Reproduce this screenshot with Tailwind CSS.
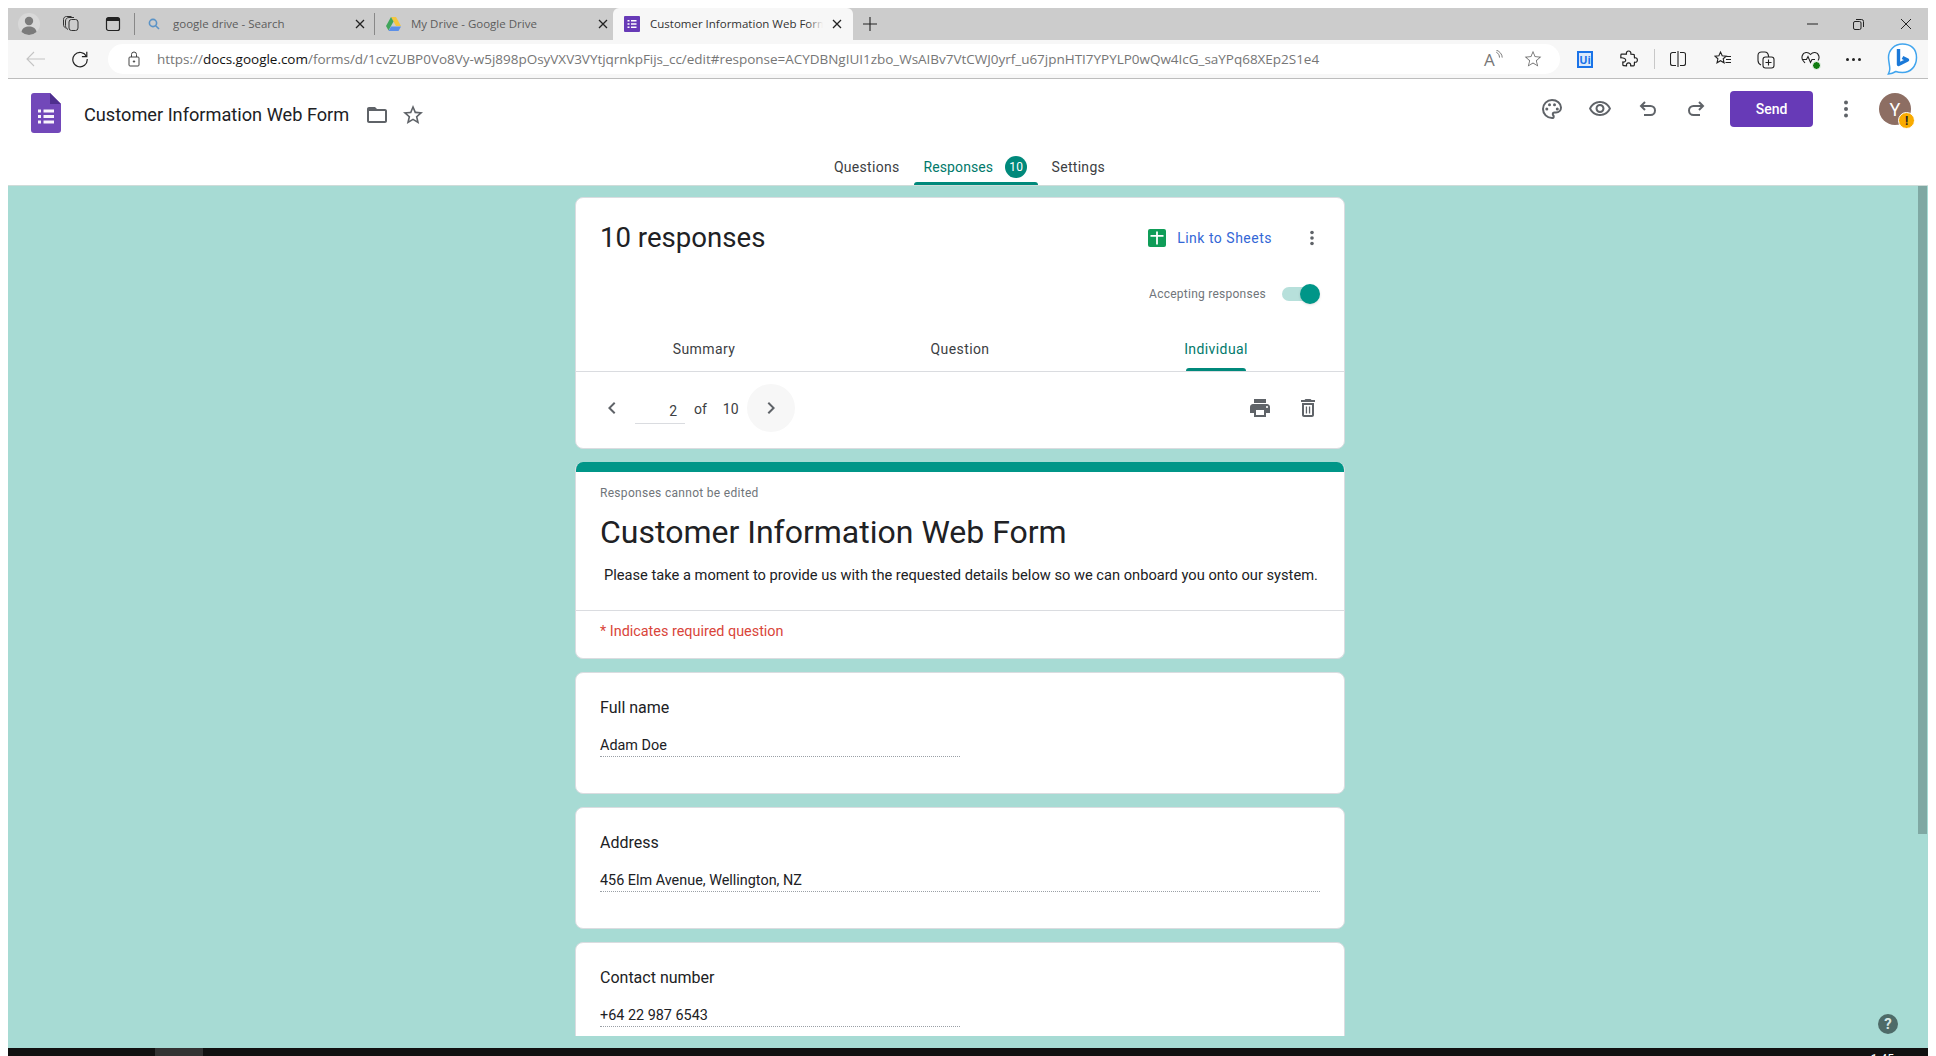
<!DOCTYPE html>
<html lang="en">
<head>
  <meta charset="UTF-8" />
  <meta name="viewport" content="width=device-width, initial-scale=1.0"/>
  <title>Customer Information Web Form - Google Forms</title>
  <script src="https://cdn.jsdelivr.net/npm/@tailwindcss/browser@4"></script>
</head>
<body class="bg-white font-['Roboto',sans-serif] overflow-hidden">
<div class="h-[1056px] pt-2 px-2 flex flex-col overflow-hidden relative">

  <!-- tab strip -->
  <div class="h-8 bg-[#cccccc] flex items-center shrink-0 font-['Open_Sans',sans-serif] text-[11.5px] text-[#5c5c5c]">
    <div class="w-[42px] flex justify-center">
      <svg width="22" height="22" viewBox="0 0 22 22"><circle cx="11" cy="11" r="11" fill="#d8d8d8"/><circle cx="11" cy="8" r="4.2" fill="#7b7b7b"/><path d="M3.5 19c.6-4 3.8-5.5 7.5-5.5s6.900 1.500 7.500 5.500a11 11 0 0 1-15 0z" fill="#7b7b7b"/></svg>
    </div>
    <div class="w-[42px] flex justify-center">
      <svg width="18" height="18" viewBox="0 0 18 18" fill="none" stroke="#333" stroke-width="1"><rect x="7" y="4.500" width="9" height="11" rx="2.500"/><path d="M6 14.500c-1.500-.8-2.500-2-2.500-4V6c0-2 1.500-3.500 3.500-3.500h5M3.500 13C2 12 1.500 11 1.500 9V4.500c0-2 1.500-3 3-3h5"/></svg>
    </div>
    <div class="w-[42px] flex justify-center">
      <svg width="16" height="16" viewBox="0 0 16 16" fill="none"><rect x="1.500" y="1.500" width="13" height="13" rx="2" stroke="#222" stroke-width="1.200"/><path d="M1.500 3.500a2 2 0 0 1 2-2h9a2 2 0 0 1 2 2V5h-13z" fill="#222"/></svg>
    </div>
    <div class="w-px h-[22px] bg-[#888] mr-[1px]"></div>

    <div class="w-[238px] flex items-center h-full pl-[11px]">
      <svg width="14" height="14" viewBox="0 0 14 14" fill="none" stroke="#5a93c7" stroke-width="1.600"><circle cx="6" cy="6" r="3.600"/><path d="m8.700 8.700 3.300 3.300"/></svg>
      <span class="ml-[12px] w-[182px]">google drive - Search</span>
      <svg width="10" height="10" viewBox="0 0 10 10" stroke="#222" stroke-width="1.300"><path d="m1 1 8 8M9 1l-8 8"/></svg>
    </div>
    <div class="w-px h-[22px] bg-[#888]"></div>

    <div class="w-[238px] flex items-center h-full pl-[11px]">
      <svg width="15" height="14" viewBox="0 0 15 14"><path d="M5 0h5l5 9h-5z" fill="#f4c63f"/><path d="M5 0 0 9l2.500 4.500L7.500 4.500z" fill="#3fa55b"/><path d="M2.500 14h10L15 9.500H5z" fill="#5b8fe8"/></svg>
      <span class="ml-[10px] w-[187px]">My Drive - Google Drive</span>
      <svg width="10" height="10" viewBox="0 0 10 10" stroke="#222" stroke-width="1.300"><path d="m1 1 8 8M9 1l-8 8"/></svg>
    </div>

    <div class="w-[240px] h-full bg-[#f7f7f7] rounded-t-[6px] flex items-center pl-[11px] text-[#333]">
      <svg width="16" height="16" viewBox="0 0 16 16"><rect width="16" height="16" rx="1" fill="#673ab7"/><path d="M3.500 4h2v1.500h-2zM7 4h5.500v1.500H7zM3.500 7.250h2v1.500h-2zM7 7.250h5.500v1.500H7zM3.500 10.500h2V12h-2zM7 10.500h5.500V12H7z" fill="#fff"/></svg>
      <span class="relative ml-[10px] w-[173px] overflow-hidden whitespace-nowrap">Customer Information Web Form
        <span class="absolute right-0 top-0 bottom-0 w-4 bg-linear-to-l from-[#f7f7f7] to-transparent"></span>
      </span>
      <svg class="ml-[9px]" width="10" height="10" viewBox="0 0 10 10" stroke="#222" stroke-width="1.300"><path d="m1 1 8 8M9 1l-8 8"/></svg>
    </div>
    <svg class="ml-[10px]" width="14" height="14" viewBox="0 0 14 14" stroke="#222" stroke-width="1.100"><path d="M7 0v14M0 7h14"/></svg>

    <div class="ml-auto flex items-center pr-[16px]">
      <svg class="mr-[35px]" width="11" height="2" viewBox="0 0 11 2"><path d="M0 1h11" stroke="#222"/></svg>
      <svg class="mr-[36px]" width="11" height="11" viewBox="0 0 11 11" fill="none" stroke="#222"><rect x=".500" y="2.500" width="7.500" height="8" rx="1.500"/><path d="M3 .500h5.500a2 2 0 0 1 2 2V8"/></svg>
      <svg width="12" height="12" viewBox="0 0 12 12" stroke="#222"><path d="m1 1 10 10M11 1 1 11"/></svg>
    </div>
  </div>

  <!-- address bar -->
  <div class="h-[39px] bg-[#f7f7f7] border-b border-[#bdbdbd] flex items-center shrink-0">
    <div class="w-[50px] flex justify-center pl-[6px]">
      <svg width="20" height="16" viewBox="0 0 20 16" fill="none" stroke="#c4c4c4" stroke-width="1.100"><path d="M19 8H1M8 1 1 8l7 7"/></svg>
    </div>
    <div class="w-[44px] flex justify-center">
      <svg width="18" height="18" viewBox="0 0 18 18" fill="none" stroke="#222" stroke-width="1.200"><path d="M15.500 6.500A7.200 7.200 0 1 0 16.200 9"/><path d="M15.800 1.800v4.900h-4.900"/></svg>
    </div>
    <div class="w-[1452px] ml-[6px] h-[30px] bg-white rounded-full flex items-center">
      <svg class="ml-[20px]" width="12" height="16" viewBox="0 0 12 16" fill="none" stroke="#444"><rect x="1" y="6" width="10" height="9" rx="1"/><path d="M3.500 6V3.500a2.500 2.500 0 0 1 5 0V6"/><circle cx="6" cy="10.500" r=".7" fill="#444"/></svg>
      <span class="ml-[17px] w-[1172px] whitespace-nowrap overflow-hidden font-['Open_Sans',sans-serif] text-[13.5px] tracking-[-0.02px] text-[#767676]">https://<span class="text-[#111]">docs.google.com</span>/forms/d/1cvZUBP0Vo8Vy-w5j898pOsyVXV3VYtjqrnkpFijs_cc/edit#response=ACYDBNgIUI1zbo_WsAIBv7VtCWJ0yrf_u67jpnHTI7YPYLP0wQw4IcG_saYPq68XEp2S1e4</span>
      <span class="ml-[155px] text-[17px] leading-none text-[#777] font-['Open_Sans',sans-serif]">A</span>
      <svg width="9" height="13" viewBox="0 0 8 12" fill="none" stroke="#777" stroke-width=".9" class="mb-[6px]"><path d="M1 2c2 1 3 3 3 5M1 0c3.500 1.500 5.500 4 5.500 7"/></svg>
      <svg class="ml-[19px]" width="20" height="20" viewBox="0 0 24 24" fill="#6b6b6b"><path d="M22 9.240l-7.190-.62L12 2 9.190 8.630 2 9.240l5.460 4.730L5.820 21 12 17.270 18.180 21l-1.630-7.030L22 9.240zM12 16.200l-4.750 2.900 1.260-5.410-4.200-3.640 5.530-.48L12 4.500l2.160 5.070 5.530.48-4.200 3.640 1.260 5.410z"/></svg>
    </div>
    <div class="flex items-center ml-[17px]">
      <div class="w-4 h-[17px] border-2 border-[#1a73e8] bg-[#dbe9fb] flex items-center justify-center text-[11px] font-bold text-[#1a73e8] font-['Open_Sans',sans-serif] leading-none">Ui</div>
      <svg class="ml-[27px]" width="18" height="18" viewBox="0 0 18 18" fill="none" stroke="#222" stroke-width="1.200" stroke-linejoin="round"><path d="M6.500 4.200C6 2.300 7.100 1 8.600 1s2.700 1.300 2.200 3.200l2.700.2c.5 0 .8.300.8.800l.2 2.700c1.900-.5 2.900.6 2.900 2.100s-1 2.700-2.900 2.100l-.2 3c0 .5-.3.800-.8.800l-2.900-.1c.5-1.800-.6-2.900-2-2.900s-2.500 1.100-2 2.900l-2.900-.1c-.5 0-.8-.3-.8-.8l-.1-3c1.800.5 2.900-.6 2.900-2S2.600 7.400.8 7.900l.1-2.900c0-.5.300-.8.800-.8z"/></svg>
      <div class="ml-[16px] w-px h-5 bg-[#c8c8c8]"></div>
      <svg class="ml-[15px]" width="16" height="16" viewBox="0 0 16 16" fill="none" stroke="#222" stroke-width="1.100"><path d="M8 0v16M6 1.500H2.500a2 2 0 0 0-2 2v9a2 2 0 0 0 2 2H6M10 1.500h3.500a2 2 0 0 1 2 2v9a2 2 0 0 1-2 2H10"/></svg>
      <svg class="ml-[28px]" width="18" height="18" viewBox="0 0 18 18" fill="none" stroke="#222" stroke-width="1.100"><path d="m6.500 2 1.700 3.700 4 .4-3 2.700.9 4-3.600-2.100-3.500 2.100.9-4-3-2.700 4-.4zM12 9.500h5M12.500 6.500h4.500M11.500 12.500h5.500"/></svg>
      <svg class="ml-[24px]" width="19" height="19" viewBox="0 0 19 19" fill="none" stroke="#222" stroke-width="1.100"><rect x="7" y="7" width="11" height="11" rx="2.500"/><path d="M12.500 9.500v6M9.500 12.500h6M5 15c-2-1-3-2.500-3-4.500V5.500c0-2 1.500-3.500 3.500-3.500H9c1.500 0 2.500.8 3 2l.8 3"/></svg>
      <span class="ml-[26px] relative w-[19px] h-[19px]">
        <svg width="19" height="19" viewBox="0 0 19 19" fill="none" stroke="#222" stroke-width="1.100"><path d="M4 13 2 10.500C0 8 1 3 5 2.500c2-.2 3.500.8 4.500 2 1-1.200 2.500-2.200 4.500-2 4 .5 5 5.500 3 8M1 9.500h4.500l1.500-3 2.500 6 1.500-3h3"/></svg>
        <span class="absolute right-[-1px] bottom-[-1px] w-[9px] h-[9px] rounded-full bg-[#107c10] border border-white"></span>
      </span>
      <span class="ml-[26px] flex gap-[3px]"><span class="w-[3px] h-[3px] rounded-full bg-[#222]"></span><span class="w-[3px] h-[3px] rounded-full bg-[#222]"></span><span class="w-[3px] h-[3px] rounded-full bg-[#222]"></span></span>
      <svg class="ml-[26px]" width="31" height="34" viewBox="0 0 31 34" fill="none"><path d="M15.500 2C7.500 2 1.500 8 1.500 15.500c0 4 1.300 8 1.300 11.500 0 2.500-1 4-1.500 5 3-.2 5.800-1.400 7.500-2.500 2 .8 4.300 1 6.700 1 8 0 14-6 14-15S23.500 2 15.500 2z" fill="#fff" stroke="#41a5ee" stroke-width="1.500"/><path d="M11.500 7v15.500l9-4.500-5-2.500" stroke="#1b79d8" stroke-width="3.400" stroke-linejoin="round"/></svg>
    </div>
  </div>

  <!-- forms header -->
  <div class="h-[106px] bg-white shrink-0 flex flex-col">
    <div class="h-[60px] flex items-center">
      <svg class="ml-[23px] mt-[8px]" width="30" height="40" viewBox="0 0 30 40"><path d="M3 0h16l11 11v26a3 3 0 0 1-3 3H3a3 3 0 0 1-3-3V3a3 3 0 0 1 3-3z" fill="#7248b9"/><path d="M19 0l11 11H19z" fill="#4e2f8e"/><path d="M7 16.500h3V19.500H7zM12.500 16.500H23V19.500H12.500zM7 22h3v3H7zM12.500 22H23v3H12.500zM7 27.500h3v3H7zM12.500 27.500H23v3H12.500z" fill="#fff" opacity=".95"/></svg>
      <span class="ml-[23px] mt-[12px] text-[18.2px] text-[#202124] w-[281px] whitespace-nowrap">Customer Information Web Form</span>
      <svg class="mt-[12px]" width="24" height="24" viewBox="0 0 24 24" fill="#5f6368"><path d="M20 6h-8l-2-2H4c-1.100 0-1.990.9-1.990 2L2 18c0 1.100.9 2 2 2h16c1.100 0 2-.9 2-2V8c0-1.100-.9-2-2-2zm0 12H4V8h16v10z"/></svg>
      <svg class="ml-[12px] mt-[12px]" width="24" height="24" viewBox="0 0 24 24" fill="#5f6368"><path d="M22 9.240l-7.190-.62L12 2 9.190 8.630 2 9.240l5.460 4.730L5.820 21 12 17.270 18.180 21l-1.630-7.030L22 9.240zM12 15.400l-3.760 2.270 1-4.280-3.320-2.880 4.380-.38L12 6.100l1.710 4.040 4.380.38-3.320 2.880 1 4.280L12 15.400z"/></svg>

      <div class="ml-auto flex items-center pr-[17px]">
        <svg width="24" height="24" viewBox="0 0 24 24" fill="none" stroke="#5f6368" stroke-width="2"><path d="M12 3C7 3 3 7 3 12s4 9 9 9c1.100 0 1.700-.8 1.700-1.600 0-.5-.2-.8-.5-1.100-.3-.3-.4-.7-.4-1.100 0-.9.7-1.600 1.600-1.600H16c2.800 0 5-2.200 5-5C21 6.400 17 3 12 3z"/><g fill="#5f6368" stroke="none"><circle cx="6.800" cy="12" r="1.500"/><circle cx="9.500" cy="7.800" r="1.500"/><circle cx="14.500" cy="7.800" r="1.500"/><circle cx="17.300" cy="12" r="1.500"/></g></svg>
        <svg class="ml-[24px]" width="24" height="24" viewBox="0 0 24 24" fill="#5f6368"><path d="M12 6c3.790 0 7.170 2.130 8.820 5.500C19.170 14.870 15.790 17 12 17s-7.170-2.130-8.820-5.500C4.830 8.130 8.210 6 12 6m0-2C7 4 2.730 7.110 1 11.500 2.730 15.890 7 19 12 19s9.270-3.110 11-7.500C21.270 7.110 17 4 12 4zm0 5a2.500 2.500 0 0 1 0 5 2.500 2.500 0 0 1 0-5m0-2c-2.480 0-4.500 2.020-4.500 4.500S9.520 16 12 16s4.500-2.020 4.500-4.500S14.480 7 12 7z"/></svg>
        <svg class="ml-[24px]" width="24" height="24" viewBox="0 0 24 24" fill="none" stroke="#5f6368" stroke-width="2"><path d="M9 5 5 9l4 4M5 9h9.500a4.500 4.500 0 0 1 0 9H8"/></svg>
        <svg class="ml-[24px]" width="24" height="24" viewBox="0 0 24 24" fill="none" stroke="#5f6368" stroke-width="2"><path d="m15 5 4 4-4 4M19 9H9.500a4.500 4.500 0 0 0 0 9H16"/></svg>
        <button class="ml-[22px] w-[83px] h-9 rounded bg-[#673ab7] text-white text-[14px] font-medium">Send</button>
        <svg class="ml-[21px]" width="24" height="24" viewBox="0 0 24 24" fill="#5f6368"><circle cx="12" cy="5.500" r="2"/><circle cx="12" cy="12" r="2"/><circle cx="12" cy="18.500" r="2"/></svg>
        <span class="ml-[21px] relative w-8 h-8 rounded-full bg-[#8d6e63] text-white text-[18px] flex items-center justify-center">Y
          <span class="absolute right-[-4px] bottom-[-4px] w-[17px] h-[17px] rounded-full bg-[#f9ab00] border border-white text-[#202124] text-[12px] font-bold flex items-center justify-center leading-none">!</span>
        </span>
      </div>
    </div>
    <div class="flex-1 flex justify-center text-[14px] text-[#3c4043]">
      <div class="flex items-start pt-[18px] ml-[-7px]">
        <span class="px-[10px] tracking-[.3px]">Questions</span>
        <span class="relative h-[28px] flex items-start ml-[4px] px-[10px] w-[124px] text-[#00796b] tracking-[.1px]">Responses
          <span class="ml-[12px] w-[22px] h-[22px] -mt-[1px] rounded-full bg-[#00897b] text-white text-[12px] flex items-center justify-center">10</span>
          <span class="absolute left-0 right-0 bottom-0 h-[3px] rounded-t bg-[#00897b]"></span>
        </span>
        <span class="ml-[14px] tracking-[.3px]">Settings</span>
      </div>
    </div>
  </div>

  <!-- page body -->
  <div class="relative flex-1 min-h-0 bg-[#a7dbd4] border-t border-[#cfdcd9] pb-3">
    <div class="h-full overflow-hidden pr-4">
      <div class="w-[770px] mx-auto pt-[11px] flex flex-col gap-[13px]">

        <div class="h-[252px] bg-white rounded-lg border border-[#dadce0] flex flex-col">
          <div class="h-[80px] flex items-center pl-6 pr-[20px]">
            <h2 class="text-[27.6px] text-[#202124] leading-none">10 responses</h2>
            <svg class="ml-auto" width="18" height="18" viewBox="0 0 18 18"><rect width="18" height="18" rx="2" fill="#0f9d58"/><path d="M8.100 2.500h1.800v13H8.100zM2.500 6h13v1.800h-13z" fill="#fff"/></svg>
            <span class="ml-[11px] text-[14px] text-[#3367d6] tracking-[.5px]">Link to Sheets</span>
            <svg class="ml-[28px]" width="24" height="24" viewBox="0 0 24 24" fill="#5f6368"><circle cx="12" cy="6.500" r="1.800"/><circle cx="12" cy="12" r="1.800"/><circle cx="12" cy="17.500" r="1.800"/></svg>
          </div>
          <div class="h-8 flex items-center pr-[26px] justify-end">
            <span class="text-[12px] text-[#70757a] tracking-[.25px]">Accepting responses</span>
            <span class="ml-4 relative w-[36px] h-[14px] rounded-full bg-[#b7e0db]">
              <span class="absolute right-[-2px] top-[-3px] w-5 h-5 rounded-full bg-[#009688] shadow"></span>
            </span>
          </div>
          <div class="h-[62px] grid grid-cols-3 border-b border-[#dadce0] text-[14px] text-[#3c4043] tracking-[.4px]">
            <span class="flex justify-center pt-[29px]">Summary</span>
            <span class="flex justify-center pt-[29px]">Question</span>
            <span class="relative flex justify-center pt-[29px] text-[#00796b]">Individual
              <span class="absolute left-1/2 -translate-x-1/2 bottom-0 w-[60px] h-[3px] rounded-t bg-[#00897b]"></span>
            </span>
          </div>
          <div class="flex-1 flex items-center pl-[24px] pr-[24px] pb-[4px] text-[#3c4043] text-[14px]">
            <svg width="24" height="24" viewBox="0 0 24 24" fill="#5f6368"><path d="M15.410 7.410 14 6l-6 6 6 6 1.410-1.410L10.830 12z"/></svg>
            <span class="ml-[11px] w-[50px] h-[31px] border-b border-[#dadce0] flex items-end justify-end pr-[8px] pb-[1px] mt-[1px]">2</span>
            <span class="ml-[9px] mt-[2px]">of</span>
            <span class="ml-[16px] mt-[2px]">10</span>
            <span class="ml-[8px] w-12 h-12 rounded-full bg-[#f7f7f7] flex items-center justify-center">
              <svg width="24" height="24" viewBox="0 0 24 24" fill="#5f6368"><path d="M10 6 8.590 7.410 13.170 12l-4.580 4.590L10 18l6-6z"/></svg>
            </span>
            <svg class="ml-auto" width="24" height="24" viewBox="0 0 24 24" fill="#5f6368"><path d="M19 8H5c-1.660 0-3 1.340-3 3v6h4v4h12v-4h4v-6c0-1.660-1.340-3-3-3zm-3 11H8v-5h8v5zm3-7c-.55 0-1-.45-1-1s.45-1 1-1 1 .45 1 1-.45 1-1 1zm-1-9H6v4h12V3z"/></svg>
            <svg class="ml-[24px]" width="24" height="24" viewBox="0 0 24 24" fill="#5f6368"><path d="M6 19c0 1.100.9 2 2 2h8c1.100 0 2-.9 2-2V7H6v12zM8 9h8v10H8V9zm7.500-5-1-1h-5l-1 1H5v2h14V4zM9.800 10.500h1.300v7H9.800zM12.900 10.500h1.300v7h-1.300z"/></svg>
          </div>
        </div>

        <div class="h-[197px] bg-white rounded-lg border border-[#dadce0] border-t-0 overflow-hidden flex flex-col">
          <div class="h-[10px] bg-[#009688] shrink-0 -mx-px"></div>
          <div class="h-[139px] pl-6 pt-[14px] border-b border-[#dadce0]">
            <p class="text-[12px] leading-[14px] text-[#70757a] tracking-[.3px]">Responses cannot be edited</p>
            <h1 class="mt-[12px] text-[32px] leading-[40px] text-[#202124]">Customer Information Web Form</h1>
            <p class="mt-[13px] pl-1 text-[14.67px] leading-5 text-[#202124]">Please take a moment to provide us with the requested details below so we can onboard you onto our system.</p>
          </div>
          <p class="pl-6 pt-[11px] text-[14.4px] leading-5 text-[#d9453a]">* Indicates required question</p>
        </div>

        <div class="h-[122px] shrink-0 bg-white rounded-lg border border-[#dadce0] pl-6 pt-[25px] pr-6">
          <p class="text-[16px] leading-5 text-[#202124]">Full name</p>
          <p class="w-[360px] mt-[18px] text-[14.4px] leading-5 text-[#202124] border-b border-dotted border-[#9aa0a6]">Adam Doe</p>
        </div>
        <div class="h-[122px] shrink-0 bg-white rounded-lg border border-[#dadce0] pl-6 pt-[25px] pr-6">
          <p class="text-[16px] leading-5 text-[#202124]">Address</p>
          <p class="mt-[18px] text-[14.4px] leading-5 text-[#202124] border-b border-dotted border-[#9aa0a6]">456 Elm Avenue, Wellington, NZ</p>
        </div>
        <div class="h-[122px] shrink-0 bg-white rounded-lg border border-[#dadce0] pl-6 pt-[25px] pr-6">
          <p class="text-[16px] leading-5 text-[#202124]">Contact number</p>
          <p class="w-[360px] mt-[18px] text-[14.4px] leading-5 text-[#202124] border-b border-dotted border-[#9aa0a6]">+64 22 987 6543</p>
        </div>
      </div>
    </div>
    <!-- scrollbar thumb and help button float over the page -->
    <div class="absolute right-px top-0 w-[9px] h-[648px] bg-[#7fa8a3]"></div>
    <div class="absolute right-[30px] top-[828px] w-5 h-5 rounded-full bg-[#4e6b68] text-[#d8e8e5] text-[15px] font-bold flex items-center justify-center leading-none">?</div>
  </div>

  <!-- taskbar, cut off by the bottom of the screenshot -->
  <div class="h-2 shrink-0 bg-[#111111] overflow-hidden flex text-white text-[12px] leading-[16px]">
    <div class="ml-[147px] w-[48px] h-full bg-[#333333]"></div>
    <span class="ml-auto mr-[34px] mt-[3px]">1:45</span>
  </div>
</div>
</body>
</html>
